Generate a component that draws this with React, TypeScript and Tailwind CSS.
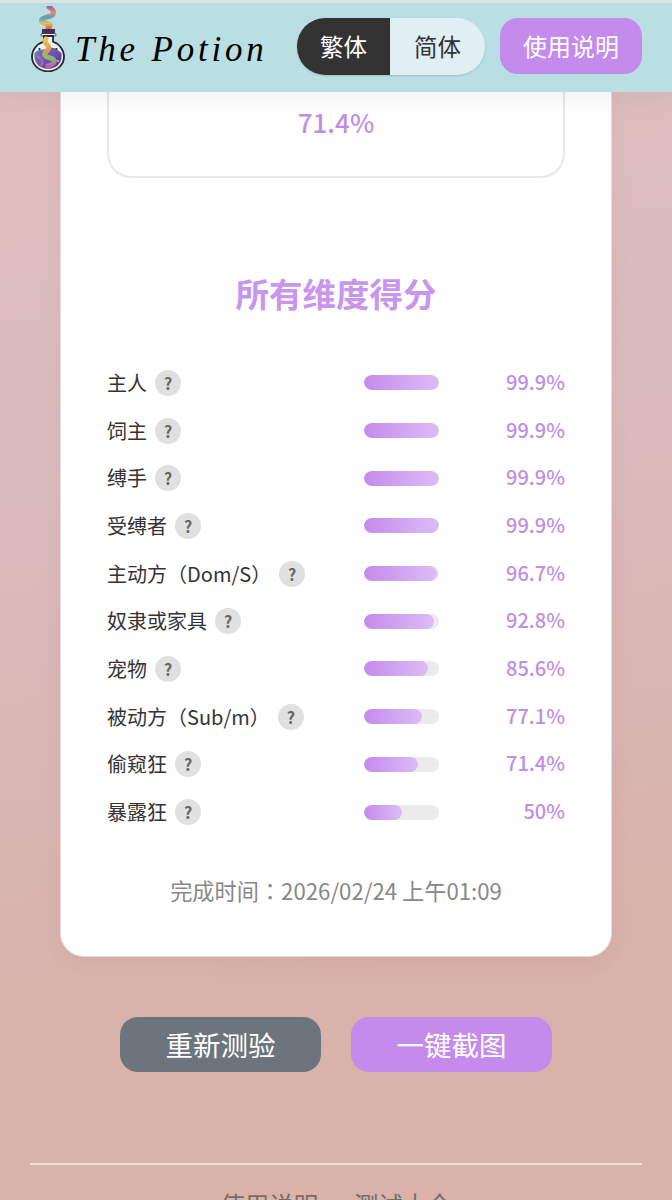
import React from "react";

const rows: [string, number, string][] = [
  ["主人", 99.9, "99.9%"],
  ["饲主", 99.9, "99.9%"],
  ["缚手", 99.9, "99.9%"],
  ["受缚者", 99.9, "99.9%"],
  ["主动方（Dom/S）", 96.7, "96.7%"],
  ["奴隶或家具", 92.8, "92.8%"],
  ["宠物", 85.6, "85.6%"],
  ["被动方（Sub/m）", 77.1, "77.1%"],
  ["偷窥狂", 71.4, "71.4%"],
  ["暴露狂", 50, "50%"],
];

function Flask() {
  return (
    <svg width="34" height="66" viewBox="0 0 34 66" className="mb-[16px] shrink-0">
      <defs>
        <linearGradient id="smoke" x1="0" y1="0" x2="0" y2="1">
          <stop offset="0" stopColor="#a8609a" />
          <stop offset="0.28" stopColor="#dd8f68" />
          <stop offset="0.52" stopColor="#4f9fc6" />
          <stop offset="0.78" stopColor="#e6c24c" />
          <stop offset="1" stopColor="#c9705c" />
        </linearGradient>
        <linearGradient id="liquid" x1="0" y1="0" x2="1" y2="1">
          <stop offset="0" stopColor="#4e8ec6" />
          <stop offset="0.5" stopColor="#6d55b2" />
          <stop offset="1" stopColor="#46318c" />
        </linearGradient>
        <linearGradient id="swirl" x1="0" y1="0" x2="0" y2="1">
          <stop offset="0" stopColor="#e8c64e" />
          <stop offset="0.4" stopColor="#e4984c" />
          <stop offset="0.7" stopColor="#8cbc70" />
          <stop offset="1" stopColor="#bd62a4" />
        </linearGradient>
      </defs>
      <path d="M18 1 C24 5 24 9 18 10.5 C11 12 8 15 13 17 C18 18.5 22 18 17 22" fill="none" stroke="url(#smoke)" strokeWidth="5" strokeLinecap="round" />
      <path d="M11 23 h13 v4.5 h-13 z" fill="#4a2c4e" />
      <rect x="10" y="27.5" width="15" height="2.6" rx="1.2" fill="#f4f1f1" stroke="#33283a" strokeWidth="0.9" />
      <path d="M13 30 v5.6 C6 37.6 1 43.6 1 50.5 C1 59 8 65.4 17 65.4 C26 65.4 33 59 33 50.5 C33 43.6 28 37.6 22 35.6 V30 Z" fill="#eef1f2" stroke="#2b2735" strokeWidth="1.8" />
      <path d="M3.6 47 C8 42 13 45 17 42 C22 40 27 44 30.4 47 C32 56 26 62.8 17 62.8 C8 62.8 2 56 3.6 47 Z" fill="url(#liquid)" />
      <path d="M15 33 C11 38 21 39 17 44 C12 48 12 50 19 52 C26 54 24 58 17 60" fill="none" stroke="url(#swirl)" strokeWidth="5" strokeLinecap="round" strokeLinejoin="round" />
      <path d="M6 50 C9 52 10 52 11 55 C12 58 11 59 10 59" fill="none" stroke="#bd62a4" strokeWidth="2.2" strokeLinecap="round" />
      <circle cx="8.5" cy="43" r="1.1" fill="#2b2735" />
      <circle cx="25.5" cy="43" r="1.1" fill="#2b2735" />
      <circle cx="27" cy="55" r="0.9" fill="#f0d0e8" />
    </svg>
  );
}

export default function App() {
  return (
    <div className="h-[1200px] overflow-hidden bg-[linear-gradient(170deg,#e0bfbc_0%,#dabbbd_35%,#d9b2aa_80%)] font-['Noto_Sans_CJK_SC',sans-serif]">
      <header className="relative z-10 flex h-[92px] items-center border-t-[3px] border-[#dbe4e3] bg-[#b9dfe2] pb-[2px] pl-[31px] pr-[30px] shadow-[0_4px_28px_rgba(0,0,0,0.07)]">
        <Flask />
        <span className="ml-[10px] mt-[6px] whitespace-nowrap font-['Liberation_Serif',serif] text-[35px] italic leading-none tracking-[3.8px] text-black">
          The Potion
        </span>
        <div className="ml-auto flex h-[57px] w-[188px] overflow-hidden rounded-[28px] bg-[#dfeff3] shadow-[0_1px_2px_rgba(0,0,0,0.15)]">
          <div className="flex w-[93px] items-center justify-center bg-[#333333] text-[23.5px] text-white">繁体</div>
          <div className="flex flex-1 items-center justify-center text-[23.5px] text-[#333333]">简体</div>
        </div>
        <div className="mb-[2px] ml-[15px] flex h-[56px] w-[142px] items-center justify-center rounded-[18px] bg-[#c58bec] text-[24px] text-white">
          使用说明
        </div>
      </header>

      <main className="flex flex-col items-center">
        <section className="w-[552px] rounded-b-[24px] border border-t-0 border-[#e6dcd9] bg-white px-[46px] pb-[51px] shadow-[0_6px_20px_rgba(120,70,70,0.07)]">
          <div className="h-[86px] rounded-b-[24px] border-2 border-t-0 border-[#e8e8e8] pt-[10px] text-center text-[26px] font-medium leading-[40px] text-[#c08fe4]">
            71.4%
          </div>
          <h2 className="mb-[46px] mt-[95px] text-center text-[33.5px] font-bold leading-[40px] text-[#c896ec]">所有维度得分</h2>
          <div className="flex flex-col">
            {rows.map(([label, pct, value]) => (
              <div key={label} className="grid h-[47.7px] grid-cols-[257px_75px_1fr] items-center">
                <div className="flex items-center gap-2 text-[20px] leading-none text-[#333333]">
                  <span className="whitespace-nowrap">{label}</span>
                  <span className="flex h-[26px] w-[26px] shrink-0 items-center justify-center rounded-full bg-[#e0e0e0] text-[16px] font-bold text-[#666666]">?</span>
                </div>
                <div className="h-[15px] overflow-hidden rounded-full bg-[#ebebeb]">
                  <div className="h-full rounded-full bg-[linear-gradient(90deg,#c58bec,#dcbcf5)]" style={{ width: `${pct}%` }} />
                </div>
                <div className="pb-[2px] text-right text-[20px] font-medium text-[#c08fe4]">{value}</div>
              </div>
            ))}
          </div>
          <p className="mt-[39px] text-center font-['Noto_Sans_CJK_TC',sans-serif] text-[22.2px] leading-[30px] text-[#888888]">完成时间：2026/02/24 上午01:09</p>
        </section>

        <div className="mt-[60px] flex gap-[30px]">
          <button className="h-[55px] w-[201px] rounded-[18px] bg-[#6c757d] text-[27.5px] text-white">重新测验</button>
          <button className="h-[55px] w-[201px] rounded-[18px] bg-[#c58bec] text-[27.5px] text-white">一键截图</button>
        </div>

        <div className="mt-[91px] h-[2px] w-[612px] bg-[#f1dfdb]" />
        <p className="mt-[23px] text-center text-[24.5px] leading-[34px] text-[#7a6a66]">使用说明 · 测试大全</p>
      </main>
    </div>
  );
}
